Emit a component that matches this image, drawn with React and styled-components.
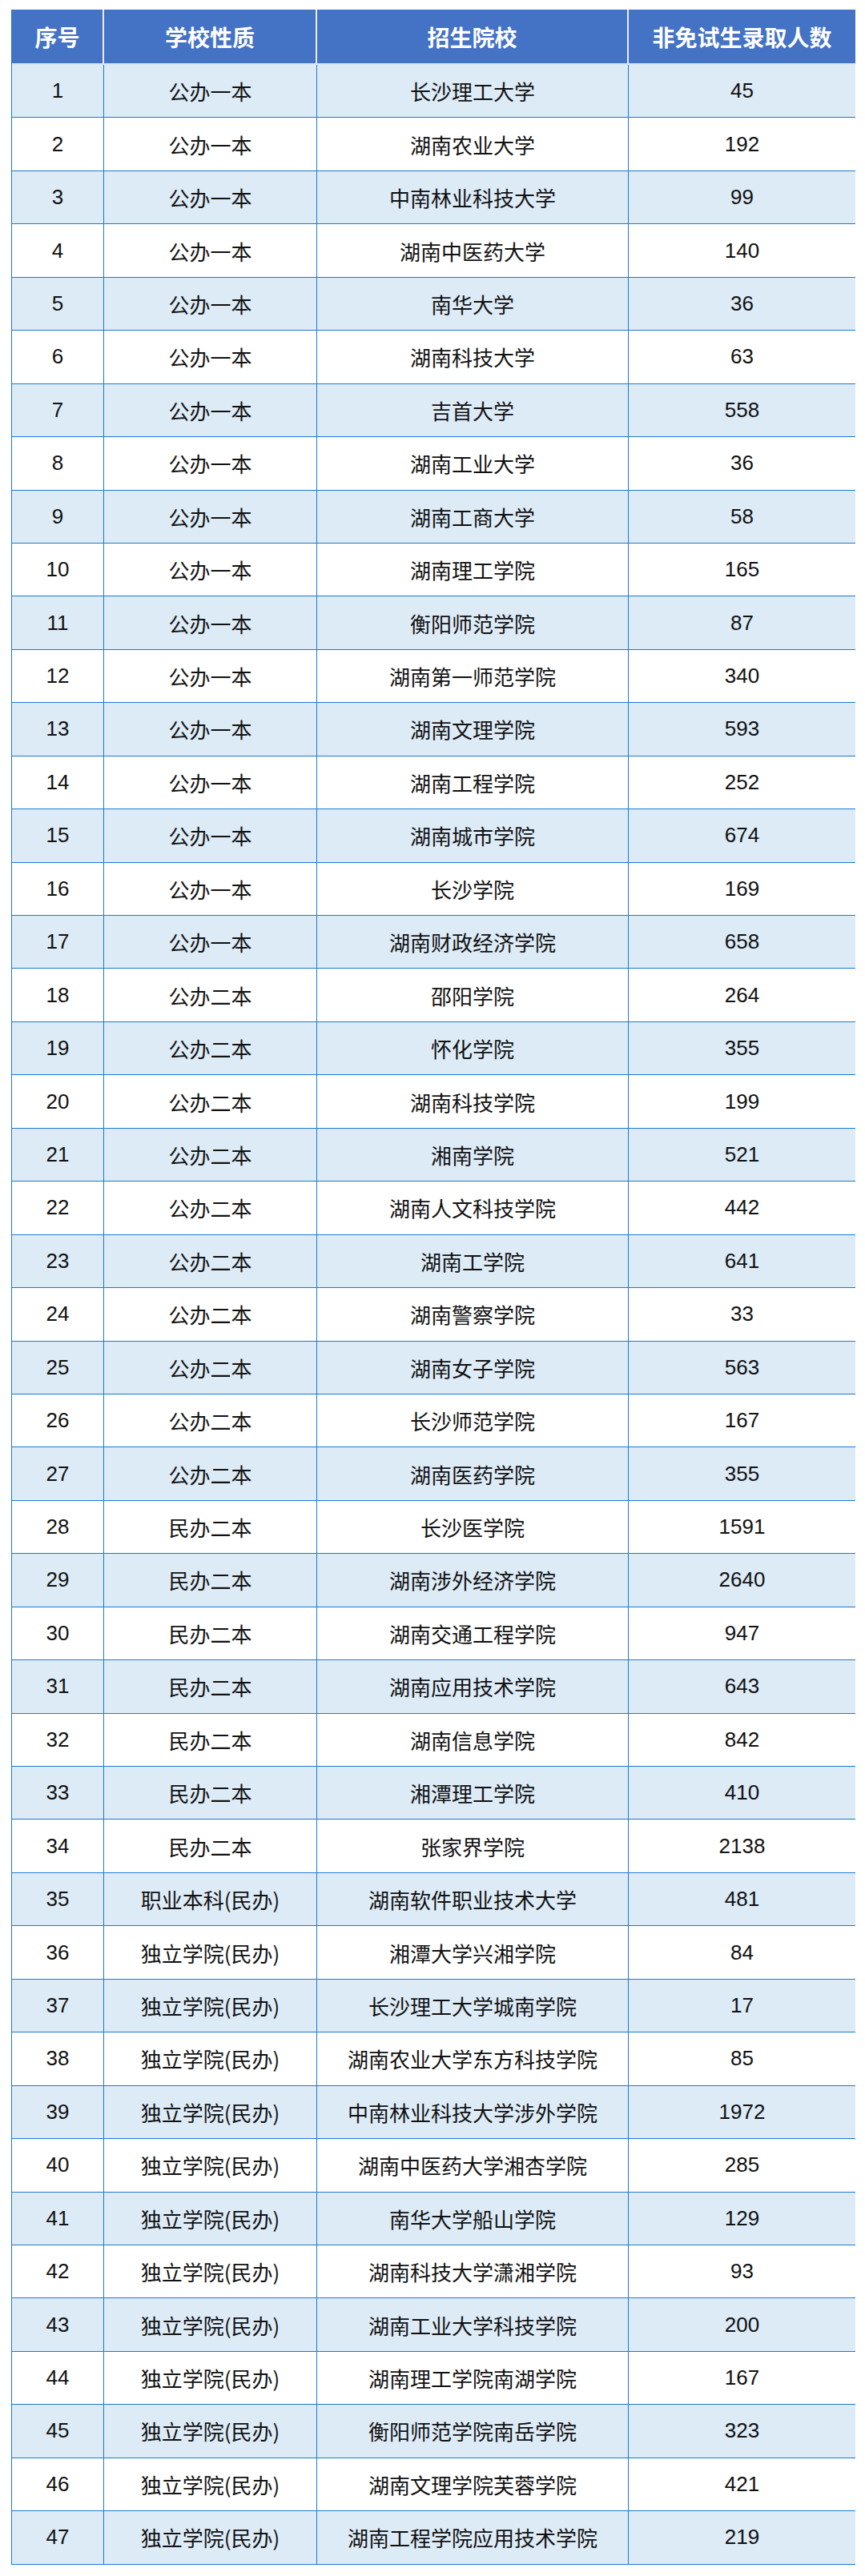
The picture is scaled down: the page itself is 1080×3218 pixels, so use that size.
import React from 'react';
import styled, { createGlobalStyle } from 'styled-components';

const GlobalStyle = createGlobalStyle`
  html, body {
    margin: 0;
    padding: 0;
    background: #ffffff;
  }
  body {
    font-family: "Liberation Sans", "Noto Sans CJK SC", sans-serif;
  }
`;

const rows = [
  ['公办一本', '长沙理工大学', 45],
  ['公办一本', '湖南农业大学', 192],
  ['公办一本', '中南林业科技大学', 99],
  ['公办一本', '湖南中医药大学', 140],
  ['公办一本', '南华大学', 36],
  ['公办一本', '湖南科技大学', 63],
  ['公办一本', '吉首大学', 558],
  ['公办一本', '湖南工业大学', 36],
  ['公办一本', '湖南工商大学', 58],
  ['公办一本', '湖南理工学院', 165],
  ['公办一本', '衡阳师范学院', 87],
  ['公办一本', '湖南第一师范学院', 340],
  ['公办一本', '湖南文理学院', 593],
  ['公办一本', '湖南工程学院', 252],
  ['公办一本', '湖南城市学院', 674],
  ['公办一本', '长沙学院', 169],
  ['公办一本', '湖南财政经济学院', 658],
  ['公办二本', '邵阳学院', 264],
  ['公办二本', '怀化学院', 355],
  ['公办二本', '湖南科技学院', 199],
  ['公办二本', '湘南学院', 521],
  ['公办二本', '湖南人文科技学院', 442],
  ['公办二本', '湖南工学院', 641],
  ['公办二本', '湖南警察学院', 33],
  ['公办二本', '湖南女子学院', 563],
  ['公办二本', '长沙师范学院', 167],
  ['公办二本', '湖南医药学院', 355],
  ['民办二本', '长沙医学院', 1591],
  ['民办二本', '湖南涉外经济学院', 2640],
  ['民办二本', '湖南交通工程学院', 947],
  ['民办二本', '湖南应用技术学院', 643],
  ['民办二本', '湖南信息学院', 842],
  ['民办二本', '湘潭理工学院', 410],
  ['民办二本', '张家界学院', 2138],
  ['职业本科(民办)', '湖南软件职业技术大学', 481],
  ['独立学院(民办)', '湘潭大学兴湘学院', 84],
  ['独立学院(民办)', '长沙理工大学城南学院', 17],
  ['独立学院(民办)', '湖南农业大学东方科技学院', 85],
  ['独立学院(民办)', '中南林业科技大学涉外学院', 1972],
  ['独立学院(民办)', '湖南中医药大学湘杏学院', 285],
  ['独立学院(民办)', '南华大学船山学院', 129],
  ['独立学院(民办)', '湖南科技大学潇湘学院', 93],
  ['独立学院(民办)', '湖南工业大学科技学院', 200],
  ['独立学院(民办)', '湖南理工学院南湖学院', 167],
  ['独立学院(民办)', '衡阳师范学院南岳学院', 323],
  ['独立学院(民办)', '湖南文理学院芙蓉学院', 421],
  ['独立学院(民办)', '湖南工程学院应用技术学院', 219],
];

const Page = styled.div`
  padding: 12px 13px 14px 14px;
`;

const Table = styled.div`
  display: grid;
  grid-template-columns: 115px 266px 389px 283px;
  grid-template-rows: 69px;
  grid-auto-rows: 66.45px;
  width: 1053px;
  border-left: 1px solid #1a7ad4;
  border-right: 1px solid #1a7ad4;
  box-sizing: border-box;
`;

const HeadCell = styled.div`
  display: flex;
  align-items: center;
  justify-content: center;
  background: #4472c4;
  color: #ffffff;
  font-family: "Noto Sans CJK SC", sans-serif;
  font-weight: 700;
  font-size: 28px;
  border-right: ${(p) => (p.$last ? 'none' : '2px solid #e8eef8')};
  border-bottom: 2px solid #dbe6f5;
  box-sizing: border-box;
`;

const Cell = styled.div`
  display: flex;
  align-items: center;
  justify-content: center;
  background: ${(p) => (p.$shaded ? '#ddebf7' : '#ffffff')};
  color: #111111;
  font-size: 26px;
  font-family: "Noto Sans CJK SC", sans-serif;
  border-right: ${(p) => (p.$last ? 'none' : '1px solid #1a7ad4')};
  border-bottom: 1px solid #1a7ad4;
  box-sizing: border-box;
  white-space: nowrap;
`;

const Num = styled.span`
  font-family: "Liberation Sans", sans-serif;
`;

const App = () => {
  return (
    <Page>
      <GlobalStyle />
      <Table>
        <HeadCell>序号</HeadCell>
        <HeadCell>学校性质</HeadCell>
        <HeadCell>招生院校</HeadCell>
        <HeadCell $last>非免试生录取人数</HeadCell>
        {rows.map((r, i) => {
          const shaded = i % 2 === 0;
          return (
            <React.Fragment key={i}>
              <Cell $shaded={shaded}>
                <Num>{i + 1}</Num>
              </Cell>
              <Cell $shaded={shaded}>{r[0]}</Cell>
              <Cell $shaded={shaded}>{r[1]}</Cell>
              <Cell $shaded={shaded} $last>
                <Num>{r[2]}</Num>
              </Cell>
            </React.Fragment>
          );
        })}
      </Table>
    </Page>
  );
};

export default App;
